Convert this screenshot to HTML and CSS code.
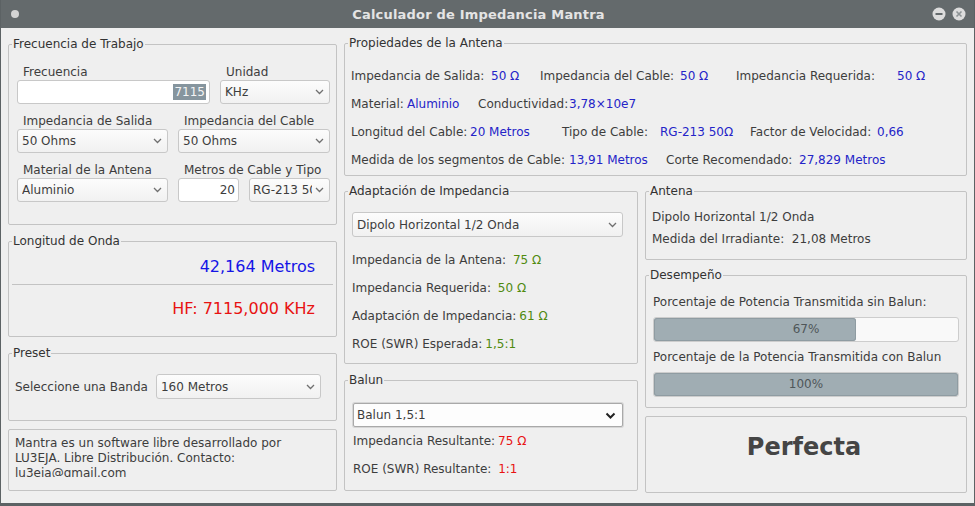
FILE: index.html
```html
<!DOCTYPE html>
<html lang="es">
  <head>
    <meta charset="UTF-8" />
    <title>Calculador de Impedancia Mantra</title>
    <link rel="stylesheet" href="styles.css">
  </head>
  <body>
    <div class="window">
      <header class="titlebar">
        <span class="tb-dot"></span>
        <span class="tb-title">Calculador de Impedancia Mantra</span>
        <span class="tb-buttons">
          <svg width="14" height="14" viewBox="0 0 14 14"><circle cx="7" cy="7" r="6.5" fill="#dcdcdc"/><rect x="3.5" y="6" width="7" height="2" fill="#646a6c"/></svg>
          <svg width="14" height="14" viewBox="0 0 14 14"><circle cx="7" cy="7" r="6.5" fill="#dcdcdc"/><path d="M4.5 4.5l5 5M9.5 4.5l-5 5" stroke="#8d9395" stroke-width="1.6"/></svg>
        </span>
      </header>

      <main class="content">
        <div class="col-left">
          <fieldset class="group g-freq">
            <legend>Frecuencia de Trabajo</legend>
            <div class="form-row row-freq">
              <div class="field">
                <label class="field-label">Frecuencia</label>
                <div class="textbox"><span class="selected">7115</span></div>
              </div>
              <div class="field">
                <label class="field-label">Unidad</label>
                <div class="combo">
                  <span class="combo-text">KHz</span>
                  <svg class="chev" width="9" height="6" viewBox="0 0 9 6"><path d="M1 1l3.5 3.5L8 1" fill="none" stroke="#707070" stroke-width="1.3"/></svg>
                </div>
              </div>
            </div>
            <div class="form-row row-half">
              <div class="field">
                <label class="field-label">Impedancia de Salida</label>
                <div class="combo">
                  <span class="combo-text">50 Ohms</span>
                  <svg class="chev" width="9" height="6" viewBox="0 0 9 6"><path d="M1 1l3.5 3.5L8 1" fill="none" stroke="#707070" stroke-width="1.3"/></svg>
                </div>
              </div>
              <div class="field">
                <label class="field-label">Impedancia del Cable</label>
                <div class="combo">
                  <span class="combo-text">50 Ohms</span>
                  <svg class="chev" width="9" height="6" viewBox="0 0 9 6"><path d="M1 1l3.5 3.5L8 1" fill="none" stroke="#707070" stroke-width="1.3"/></svg>
                </div>
              </div>
            </div>
            <div class="form-row row-half">
              <div class="field">
                <label class="field-label">Material de la Antena</label>
                <div class="combo">
                  <span class="combo-text">Aluminio</span>
                  <svg class="chev" width="9" height="6" viewBox="0 0 9 6"><path d="M1 1l3.5 3.5L8 1" fill="none" stroke="#707070" stroke-width="1.3"/></svg>
                </div>
              </div>
              <div class="field">
                <label class="field-label">Metros de Cable y Tipo</label>
                <div class="cable-pair">
                  <div class="textbox textbox-short">20</div>
                  <div class="combo combo-short">
                    <span class="combo-text">RG-213 50Ω</span>
                    <svg class="chev" width="9" height="6" viewBox="0 0 9 6"><path d="M1 1l3.5 3.5L8 1" fill="none" stroke="#707070" stroke-width="1.3"/></svg>
                  </div>
                </div>
              </div>
            </div>
          </fieldset>

          <fieldset class="group g-wave">
            <legend>Longitud de Onda</legend>
            <div class="wave-value blue-big">42,164 Metros</div>
            <div class="wave-sep"></div>
            <div class="wave-value wave-hf red">HF: 7115,000 KHz</div>
          </fieldset>

          <fieldset class="group g-preset">
            <legend>Preset</legend>
            <div class="preset-row">
              <span>Seleccione una Banda</span>
              <div class="combo combo-band">
                <span class="combo-text">160 Metros</span>
                <svg class="chev" width="9" height="6" viewBox="0 0 9 6"><path d="M1 1l3.5 3.5L8 1" fill="none" stroke="#707070" stroke-width="1.3"/></svg>
              </div>
            </div>
          </fieldset>

          <div class="info-box">
            <div class="info-text">Mantra es un software libre desarrollado por LU3EJA. Libre Distribución. Contacto: lu3eja@gmail.com</div>
          </div>
        </div>

        <div class="col-main">
          <fieldset class="group g-props">
            <legend>Propiedades de la Antena</legend>
            <div class="prop-row pr-1">
              <span>Impedancia de Salida:</span><span class="blue">50 Ω</span>
              <span>Impedancia del Cable:</span><span class="blue">50 Ω</span>
              <span>Impedancia Requerida:</span><span class="blue">50 Ω</span>
            </div>
            <div class="prop-row pr-2">
              <span>Material:</span><span class="blue">Aluminio</span>
              <span>Conductividad:</span><span class="blue">3,78×10e7</span>
            </div>
            <div class="prop-row pr-3">
              <span>Longitud del Cable:</span><span class="blue">20 Metros</span>
              <span>Tipo de Cable:</span><span class="blue">RG-213 50Ω</span>
              <span>Factor de Velocidad:</span><span class="blue">0,66</span>
            </div>
            <div class="prop-row pr-4">
              <span>Medida de los segmentos de Cable:</span><span class="blue">13,91 Metros</span>
              <span>Corte Recomendado:</span><span class="blue">27,829 Metros</span>
            </div>
          </fieldset>

          <div class="main-bottom">
            <div class="col-mid">
              <fieldset class="group g-adapt">
                <legend>Adaptación de Impedancia</legend>
                <div class="combo combo-wide">
                  <span class="combo-text">Dipolo Horizontal 1/2 Onda</span>
                  <svg class="chev" width="9" height="6" viewBox="0 0 9 6"><path d="M1 1l3.5 3.5L8 1" fill="none" stroke="#707070" stroke-width="1.3"/></svg>
                </div>
                <div class="kv-row"><span>Impedancia de la Antena:&nbsp;</span><span class="green">75 Ω</span></div>
                <div class="kv-row"><span>Impedancia Requerida:&nbsp;</span><span class="green">50 Ω</span></div>
                <div class="kv-row"><span>Adaptación de Impedancia:</span><span class="green">61 Ω</span></div>
                <div class="kv-row"><span>ROE (SWR) Esperada:</span><span class="green">1,5:1</span></div>
              </fieldset>

              <fieldset class="group g-balun">
                <legend>Balun</legend>
                <div class="combo combo-native">
                  <span class="combo-text">Balun 1,5:1</span>
                  <svg class="chev" width="11" height="7" viewBox="0 0 11 7"><path d="M1.5 1.5l4 4 4-4" fill="none" stroke="#222" stroke-width="2"/></svg>
                </div>
                <div class="kv-row"><span>Impedancia Resultante:</span><span class="red">75 Ω</span></div>
                <div class="kv-row"><span>ROE (SWR) Resultante:&nbsp;</span><span class="red">1:1</span></div>
              </fieldset>
            </div>

            <div class="col-right">
              <fieldset class="group g-antena">
                <legend>Antena</legend>
                <div class="line">Dipolo Horizontal 1/2 Onda</div>
                <div class="line">Medida del Irradiante:&nbsp; 21,08 Metros</div>
              </fieldset>

              <fieldset class="group g-perf">
                <legend>Desempeño</legend>
                <div class="perf-label">Porcentaje de Potencia Transmitida sin Balun:</div>
                <div class="progress">
                  <div class="progress-fill" style="width: 66.5%"></div>
                  <span class="progress-text">67%</span>
                </div>
                <div class="perf-label">Porcentaje de la Potencia Transmitida con Balun</div>
                <div class="progress">
                  <div class="progress-fill" style="width: 100%"></div>
                  <span class="progress-text">100%</span>
                </div>
              </fieldset>

              <div class="verdict">Perfecta</div>
            </div>
          </div>
        </div>
      </main>
    </div>
  </body>
</html>
```

FILE: styles.css
```css
* {
  box-sizing: border-box;
}
body {
  margin: 0;
  font-family: "DejaVu Sans", Verdana, sans-serif;
  font-size: 12px;
  color: #3d3d3d;
}
.window {
  width: 975px;
  height: 506px;
  background: #efefef;
  border-left: 1px solid #5c6264;
  border-right: 1px solid #5c6264;
  border-bottom: 3px solid #5c6264;
  overflow: hidden;
}

/* title bar */
.titlebar {
  height: 28px;
  background: #646a6c;
  display: flex;
  align-items: center;
  padding: 0 8px 0 10px;
}
.tb-dot {
  width: 8px;
  height: 8px;
  border-radius: 50%;
  background: #d4d4d4;
}
.tb-title {
  flex: 1;
  text-align: center;
  font-weight: bold;
  font-size: 13px;
  letter-spacing: 0.2px;
  padding-left: 6px;
  color: #e4e4e4;
}
.tb-buttons {
  display: flex;
  gap: 6px;
}

/* layout */
.content {
  display: flex;
  gap: 7px;
  padding: 8px 7px 0;
}
.col-left {
  width: 329px;
  display: flex;
  flex-direction: column;
  padding-top: 1px;
}
.col-main {
  width: 623px;
  display: flex;
  flex-direction: column;
  gap: 8px;
}
.main-bottom {
  display: flex;
  gap: 7px;
}
.col-mid {
  width: 294px;
  display: flex;
  flex-direction: column;
  gap: 9px;
}
.col-right {
  width: 322px;
  display: flex;
  flex-direction: column;
  gap: 8px;
}

/* group boxes */
.group {
  margin: 0;
  min-width: 0;
  border: 1px solid #c3c3c3;
  border-radius: 2px;
  padding: 0 7px;
}
.group legend {
  padding: 0 1px;
  margin-left: -4px;
  line-height: 14px;
  color: #333;
}

/* frecuencia de trabajo */
.g-freq {
  height: 188px;
  padding: 14px 7px 0 8px;
}
.g-freq legend {
  margin-left: -5px;
}
.form-row {
  display: grid;
  column-gap: 10px;
  margin-bottom: 10px;
}
.row-freq {
  grid-template-columns: 193px 110px;
}
.row-half {
  grid-template-columns: 151px 152px;
}
.field-label {
  display: block;
  padding-left: 6px;
  line-height: 14px;
  margin-bottom: 1px;
}
.textbox {
  height: 24px;
  background: #fff;
  border: 1px solid #c8c8c8;
  border-radius: 3px;
  display: flex;
  align-items: center;
  justify-content: flex-end;
  padding-right: 3px;
}
.selected {
  background: #86959e;
  color: #f4f4f4;
  line-height: 16px;
  padding: 0 1px;
}
.textbox-short {
  width: 61px;
}
.cable-pair {
  display: flex;
  gap: 10px;
}
.combo {
  height: 24px;
  background: linear-gradient(#fcfcfc, #f1f1f1);
  border: 1px solid #c8c8c8;
  border-radius: 3px;
  display: flex;
  align-items: center;
  padding: 0 5px 0 4px;
}
.combo-text {
  flex: 1;
  min-width: 0;
  overflow: hidden;
  white-space: nowrap;
}
.chev {
  flex: none;
  margin-left: 2px;
}
.combo-short {
  width: 81px;
  padding-left: 3px;
}
.combo-short .combo-text {
  margin-right: 3px;
}
.combo-short .chev {
  margin-left: 0;
}

/* longitud de onda */
.g-wave {
  height: 103px;
  margin-top: 9px;
  padding: 0 3px;
}
.g-wave legend {
  margin-left: 0;
}
.wave-value {
  font-size: 16px;
  line-height: 19px;
  text-align: right;
  padding: 9px 18px 8px 0;
}
.wave-hf {
  padding-top: 14px;
}
.wave-sep {
  height: 1px;
  background: #c3c3c3;
}

/* preset */
.g-preset {
  height: 75px;
  margin-top: 9px;
  padding: 14px 6px 0;
}
.g-preset legend {
  margin-left: -3px;
}
.preset-row {
  display: flex;
  align-items: center;
  gap: 8px;
}
.combo-band {
  width: 165px;
  height: 25px;
}

/* info */
.info-box {
  height: 62px;
  margin-top: 8px;
  border: 1px solid #c3c3c3;
  border-radius: 2px;
  padding: 6px 6px 0;
}
.info-text {
  width: 300px;
  height: 41px;
  line-height: 15px;
  overflow: hidden;
}

/* propiedades */
.g-props {
  height: 140px;
  padding: 12px 6px 0;
}
.g-props legend {
  margin-left: -3px;
}
.prop-row {
  display: grid;
  height: 28px;
  align-items: center;
  white-space: nowrap;
}
.pr-1 {
  grid-template-columns: 140px 49px 140px 56px 161px auto;
}
.pr-2 {
  grid-template-columns: 56px 71px 91px auto;
}
.pr-3 {
  grid-template-columns: 119px 92px 98px 90px 127px auto;
}
.pr-4 {
  grid-template-columns: 218px 97px 133px auto;
}

/* adaptacion / balun */
.g-adapt {
  height: 180px;
  padding: 14px 14px 0 7px;
}
.combo-wide {
  height: 25px;
  margin-bottom: 9px;
}
.kv-row {
  display: flex;
  gap: 3px;
  height: 28px;
  align-items: center;
  white-space: nowrap;
}
.g-balun {
  height: 118px;
  padding: 16px 14px 0 8px;
}
.g-balun legend {
  margin-left: -5px;
}
.combo-native {
  height: 24px;
  background: #fdfdfd;
  border: 1px solid #a9a9a9;
  border-radius: 2px;
  box-shadow: 0 0 0 1px #d6d6d6;
  padding: 0 6px 0 3px;
}

/* antena / desempeno */
.g-antena {
  height: 76px;
  padding: 8px 6px 0;
}
.g-antena legend {
  margin-left: -3px;
}
.line {
  line-height: 22px;
}
.g-perf {
  height: 140px;
  padding: 10px 7px 0;
}
.perf-label {
  line-height: 20px;
  margin-bottom: 5px;
}
.progress {
  position: relative;
  height: 25px;
  background: #f9f9f9;
  border: 1px solid #cdcdcd;
  border-radius: 3px;
  margin-bottom: 5px;
}
.progress-fill {
  height: 100%;
  background: #a0adb3;
  border-radius: 3px;
  box-shadow: inset 0 0 0 1px #8f9ca2;
}
.progress-text {
  position: absolute;
  left: 0;
  right: 0;
  top: 0;
  line-height: 23px;
  text-align: center;
  color: #4f5659;
}
.verdict {
  height: 77px;
  border: 1px solid #c3c3c3;
  border-radius: 2px;
  text-align: center;
  font-size: 24px;
  font-weight: bold;
  line-height: 28px;
  padding: 16px 4px 0 0;
  color: #454545;
}

/* value colours */
.blue {
  color: #2424c8;
}
.blue-big {
  color: #1515e6;
}
.green {
  color: #4f8a0e;
}
.red {
  color: #e81212;
}
```
